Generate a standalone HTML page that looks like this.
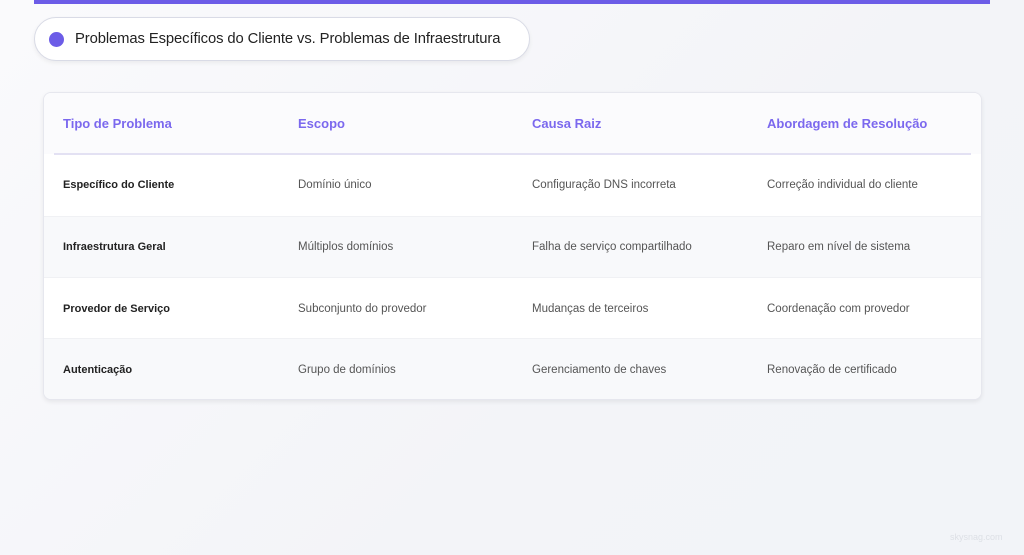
<!DOCTYPE html>
<html><head><meta charset="utf-8"><style>
*{margin:0;padding:0;box-sizing:border-box}
body{width:1024px;height:555px;overflow:hidden;background:linear-gradient(135deg,#fafafc 0%,#f3f4f8 60%,#f2f4f8 100%);font-family:"Liberation Sans",sans-serif;position:relative}
.bar{position:absolute;left:34px;top:0;width:956px;height:4px;background:#6c5ce7}
.pill{position:absolute;left:34px;top:17px;width:496px;height:44px;border-radius:22px;background:#fff;border:1px solid #d9dbe6;box-shadow:0 2px 4px rgba(0,0,0,.06)}
.dot{position:absolute;left:14px;top:14px;width:15px;height:15px;border-radius:50%;background:#6c5ce7}
.pill span{position:absolute;left:40px;top:13px;font-size:14.8px;color:#222;letter-spacing:-0.1px}
.tbl{position:absolute;left:43px;top:92px;width:939px;height:308px;border-radius:8px;background:#fff;border:1px solid #e6e7ee;box-shadow:0 2px 5px rgba(0,0,0,.07);overflow:hidden}
.hd{position:absolute;left:0;top:0;width:100%;height:61px;background:#fbfbfd}
.line{position:absolute;left:10px;right:10px;top:60px;height:2px;background:#e3e1f3}
.row{position:absolute;left:0;width:100%;height:62px;border-top:1px solid #f0f1f4}
.c{position:absolute;font-size:11.5px;color:#555}
.h{font-size:13px;color:#7b68ee;font-weight:bold}
.b{font-weight:bold;color:#222;font-size:11px}
.wm{position:absolute;left:950px;top:532px;font-size:9px;color:#dde0e6}
</style></head><body>
<div class="bar"></div>
<div class="pill"><div class="dot"></div><span>Problemas Específicos do Cliente vs. Problemas de Infraestrutura</span></div>
<div class="tbl">
<div class="hd"></div><div class="line"></div>
<div class="c h" style="left:19px;top:23px">Tipo de Problema</div>
<div class="c h" style="left:254px;top:23px">Escopo</div>
<div class="c h" style="left:488px;top:23px">Causa Raiz</div>
<div class="c h" style="left:723px;top:23px">Abordagem de Resolução</div>

<div class="row" style="top:62px;background:#fff;border-top:none">
<div class="c b" style="left:19px;top:24px">Específico do Cliente</div>
<div class="c" style="left:254px;top:24px">Domínio único</div>
<div class="c" style="left:488px;top:24px">Configuração DNS incorreta</div>
<div class="c" style="left:723px;top:24px">Correção individual do cliente</div></div>
<div class="row" style="top:123px;background:#f8f9fb">
<div class="c b" style="left:19px;top:24px">Infraestrutura Geral</div>
<div class="c" style="left:254px;top:24px">Múltiplos domínios</div>
<div class="c" style="left:488px;top:24px">Falha de serviço compartilhado</div>
<div class="c" style="left:723px;top:24px">Reparo em nível de sistema</div></div>
<div class="row" style="top:184px;background:#fff">
<div class="c b" style="left:19px;top:25px">Provedor de Serviço</div>
<div class="c" style="left:254px;top:25px">Subconjunto do provedor</div>
<div class="c" style="left:488px;top:25px">Mudanças de terceiros</div>
<div class="c" style="left:723px;top:25px">Coordenação com provedor</div></div>
<div class="row" style="top:245px;background:#f8f9fb">
<div class="c b" style="left:19px;top:25px">Autenticação</div>
<div class="c" style="left:254px;top:25px">Grupo de domínios</div>
<div class="c" style="left:488px;top:25px">Gerenciamento de chaves</div>
<div class="c" style="left:723px;top:25px">Renovação de certificado</div></div>
</div>
<div class="wm">skysnag.com</div>
</body></html>
